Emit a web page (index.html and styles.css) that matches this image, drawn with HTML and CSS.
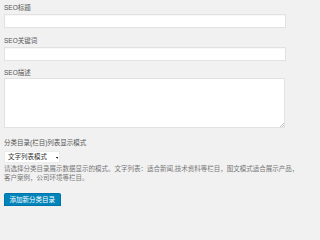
FILE: index.html
```html
<!DOCTYPE html>
<html lang="zh">
<head>
<meta charset="utf-8">
<link rel="stylesheet" href="styles.css">
</head>
<body>
<div class="form">
  <div class="field">
    <label class="label">SEO标题</label>
    <input class="text-input" type="text">
  </div>
  <div class="field">
    <label class="label">SEO关键词</label>
    <input class="text-input" type="text">
  </div>
  <div class="field field-area">
    <label class="label">SEO描述</label>
    <div class="area-wrap"><textarea class="text-area"></textarea></div>
  </div>
  <div class="field field-select">
    <label class="label">分类目录(栏目)列表显示模式</label>
    <select class="mode-select"><option>文字列表模式</option></select>
    <p class="description">请选择分类目录展示数据显示的模式。文字列表：适合新闻,技术资料等栏目，图文模式适合展示产品，客户案例，公司环境等栏目。</p>
  </div>
  <button class="button-primary" type="button">添加新分类目录</button>
</div>
</body>
</html>
```
FILE: styles.css
```css
html, body {
  margin: 0;
  padding: 0;
  background: #f1f1f1;
}
body {
  font-family: "Liberation Sans", "Noto Sans CJK SC", sans-serif;
  font-size: 6.5px;
  color: #555;
}
.form {
  padding: 3px 0 0 4px;
  display: flex;
  flex-direction: column;
  align-items: flex-start;
}
.field {
  display: flex;
  flex-direction: column;
  width: 282px;
  margin-bottom: 8px;
}
.field + .field {
  margin-bottom: 7px;
}
.label {
  display: block;
  line-height: 9px;
  height: 9px;
  margin-bottom: 2px;
  color: #555;
  white-space: nowrap;
}
.text-input {
  box-sizing: border-box;
  width: 282px;
  height: 14px;
  margin: 0;
  padding: 0 3px;
  border: 1px solid #e2e2e2;
  background: #fff;
  box-shadow: inset 0 1px 1px rgba(0,0,0,0.03);
  outline: none;
}
.field-area .label {
  margin-bottom: 1px;
}
.field.field-area {
  margin-bottom: 10px;
}
.area-wrap {
  position: relative;
  width: 281px;
  height: 50px;
}
.text-area {
  box-sizing: border-box;
  display: block;
  width: 281px;
  height: 50px;
  margin: 0;
  padding: 2px 3px;
  border: 1px solid #e2e2e2;
  background: #fff;
  resize: none;
  outline: none;
}
.area-wrap::after {
  content: "";
  position: absolute;
  right: 1px;
  bottom: 1px;
  width: 4px;
  height: 4px;
  background: linear-gradient(135deg, transparent 0 45%, #c4c4c4 45% 57%, transparent 57% 72%, #c4c4c4 72% 84%, transparent 84%);
}
.field-select .label {
  margin-bottom: 4px;
}
.field.field-select {
  width: 296px;
  margin-bottom: 0;
}
.mode-select {
  -webkit-appearance: none;
  appearance: none;
  box-sizing: border-box;
  width: 56px;
  height: 12px;
  margin: 0;
  padding: 0 0 0 3px;
  font-family: "Liberation Sans", "Noto Sans CJK SC", sans-serif;
  font-size: 6.5px;
  line-height: 10px;
  color: #333;
  border: 1px solid #ececec;
  border-radius: 0;
  background-color: #fff;
  background-image:
    linear-gradient(45deg, transparent 50%, #333 50%),
    linear-gradient(135deg, #333 50%, transparent 50%);
  background-size: 1.5px 2px, 1.5px 2px;
  background-position: 50.5px 5px, 52px 5px;
  background-repeat: no-repeat;
  outline: none;
}
.description {
  margin: 2px 0 0 0;
  line-height: 8.5px;
  color: #777;
  font-size: 6.5px;
}
.button-primary {
  margin-top: 10.5px;
  box-sizing: border-box;
  height: 13px;
  padding: 0 4.5px;
  font-family: "Liberation Sans", "Noto Sans CJK SC", sans-serif;
  font-size: 6.5px;
  line-height: 11px;
  color: #fff;
  background: #0085ba;
  border: 1px solid #0073aa;
  border-radius: 1.5px;
  box-shadow: 0 1px 0 #006799;
}
```
